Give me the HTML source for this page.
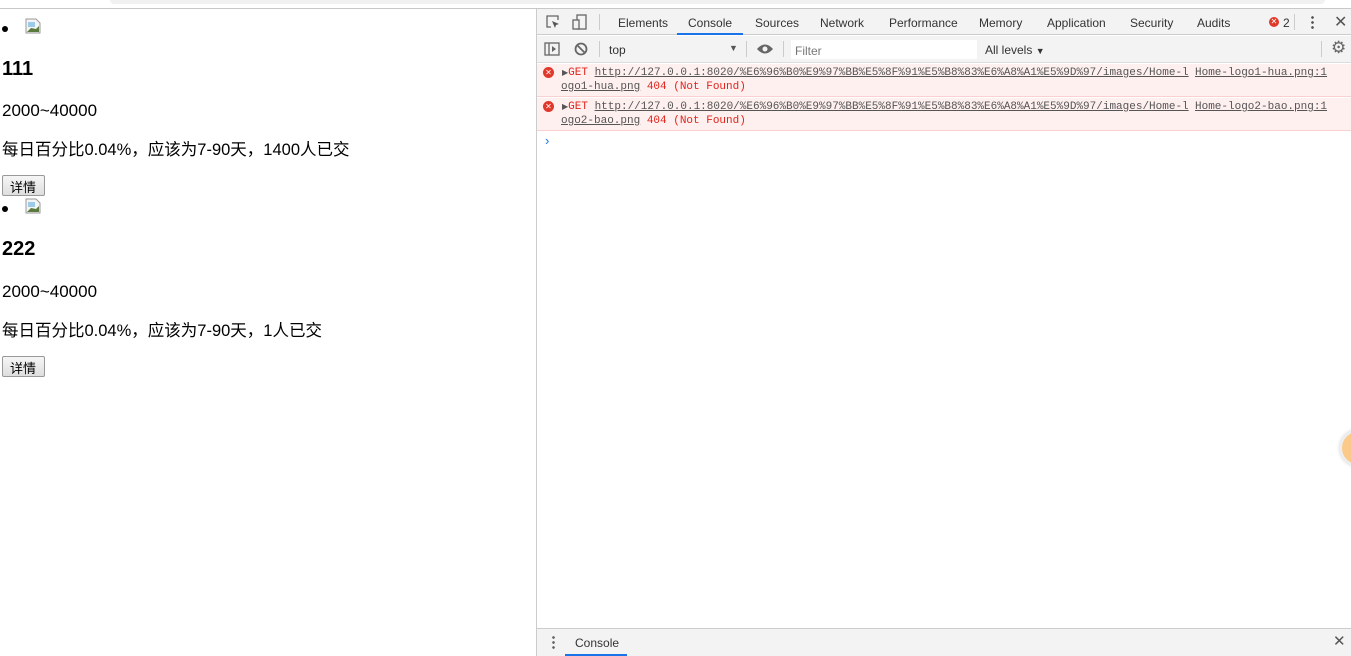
<!DOCTYPE html>
<html><head><meta charset="utf-8"><style>
*{margin:0;padding:0;box-sizing:border-box}
body{width:1351px;height:656px;overflow:hidden;background:#fff;font-family:"Liberation Sans","Noto Sans CJK SC",sans-serif;position:relative;color:#000}
.a{position:absolute;white-space:nowrap}
.t{font-size:17px}
.h{font-size:20px;font-weight:bold}
.btn{position:absolute;height:21px;border:1px solid #999;background:linear-gradient(#f6f6f6,#dedede);font-size:13px;padding:1px 8px 1px 7px;border-radius:2px}
.dot{position:absolute;width:6px;height:6px;border-radius:3px;background:#000}
.img{position:absolute;width:16px;height:16px}
.dt{font-size:12px;color:#333;font-family:"Liberation Sans",sans-serif}
.mono{font-family:"Liberation Mono",monospace;font-size:11px;color:#e0241b}
.u{text-decoration:underline;color:#555}
</style></head><body>
<div class="a" style="left:0;top:0;width:1351px;height:9px;background:#fff"></div>
<div class="a" style="left:110px;top:0;width:1215px;height:4px;background:#f1f1f1;border-radius:0 0 8px 8px"></div>
<div class="a" style="left:0;top:8px;width:1351px;height:1px;background:#c8c8c8"></div>

<!-- page -->
<div class="dot" style="left:2px;top:26px"></div>
<svg class="img" style="left:25px;top:18px" viewBox="0 0 16 16"><path d="M1 1h10l4 4v10H1z" fill="#f4f4f4" stroke="#999"/><path d="M3 4h7v5H3z" fill="#9ccbea"/><path d="M2 14l4-4 5 1 3-3v6z" fill="#5a7a3e"/></svg>
<div class="a h" style="left:2px;top:58px">111</div>
<div class="a t" style="left:2px;top:101px">2000~40000</div>
<div class="a t" style="left:2px;top:136px;font-size:16.5px">每日百分比0.04%，应该为7-90天，1400人已交</div>
<div class="btn" style="left:2px;top:175px">详情</div>
<div class="dot" style="left:2px;top:206px"></div>
<svg class="img" style="left:25px;top:198px" viewBox="0 0 16 16"><path d="M1 1h10l4 4v10H1z" fill="#f4f4f4" stroke="#999"/><path d="M3 4h7v5H3z" fill="#9ccbea"/><path d="M2 14l4-4 5 1 3-3v6z" fill="#5a7a3e"/></svg>
<div class="a h" style="left:2px;top:238px">222</div>
<div class="a t" style="left:2px;top:282px">2000~40000</div>
<div class="a t" style="left:2px;top:317px;font-size:16.5px">每日百分比0.04%，应该为7-90天，1人已交</div>
<div class="btn" style="left:2px;top:356px">详情</div>

<!-- devtools -->
<div class="a" style="left:536px;top:9px;width:1px;height:647px;background:#ccc"></div>
<div class="a" style="left:537px;top:9px;width:814px;height:26px;background:#f3f3f3;border-bottom:1px solid #ccc"></div>
<svg class="a" style="left:545px;top:14px" width="16" height="16" viewBox="0 0 16 16"><path d="M6 13H2V2h11v4" fill="none" stroke="#666" stroke-width="1.3"/><path d="M7 7l7 3-3 1-1 3z" fill="#555"/></svg>
<svg class="a" style="left:572px;top:14px" width="16" height="16" viewBox="0 0 16 16"><rect x="5" y="1" width="9" height="14" fill="none" stroke="#666" stroke-width="1.3"/><rect x="1" y="6" width="6" height="9" fill="#f3f3f3" stroke="#666" stroke-width="1.3"/></svg>
<div class="a" style="left:599px;top:14px;width:1px;height:16px;background:#ccc"></div>
<div class="a dt" style="left:618px;top:16px">Elements</div>
<div class="a dt" style="left:688px;top:16px">Console</div>
<div class="a" style="left:677px;top:33px;width:66px;height:2px;background:#1a73e8"></div>
<div class="a dt" style="left:755px;top:16px">Sources</div>
<div class="a dt" style="left:820px;top:16px">Network</div>
<div class="a dt" style="left:889px;top:16px">Performance</div>
<div class="a dt" style="left:979px;top:16px">Memory</div>
<div class="a dt" style="left:1047px;top:16px">Application</div>
<div class="a dt" style="left:1130px;top:16px">Security</div>
<div class="a dt" style="left:1197px;top:16px">Audits</div>
<div class="a" style="left:1269px;top:17px;width:10px;height:10px;border-radius:5px;background:#e0392b;color:#fff;font-size:8px;line-height:10px;text-align:center">✕</div>
<div class="a dt" style="left:1283px;top:16px">2</div>
<div class="a" style="left:1294px;top:14px;width:1px;height:16px;background:#ccc"></div>
<div class="a" style="left:1311px;top:15px;width:3px;height:14px;background:radial-gradient(circle,#555 1.2px,transparent 1.5px) 0 0/3px 5px"></div>
<div class="a" style="left:1334px;top:12px;font-size:16px;color:#555">✕</div>

<div class="a" style="left:537px;top:36px;width:814px;height:27px;background:#f3f3f3;border-bottom:1px solid #ddd"></div>
<svg class="a" style="left:544px;top:42px" width="16" height="14" viewBox="0 0 16 14"><rect x="1" y="1" width="14" height="12" fill="none" stroke="#666" stroke-width="1.3"/><path d="M5 1v12" stroke="#666" stroke-width="1.3"/><path d="M8 4l4 3-4 3z" fill="#666"/></svg>
<svg class="a" style="left:574px;top:42px" width="14" height="14" viewBox="0 0 14 14"><circle cx="7" cy="7" r="5.5" fill="none" stroke="#666" stroke-width="1.8"/><path d="M3 3l8 8" stroke="#666" stroke-width="1.8"/></svg>
<div class="a" style="left:599px;top:41px;width:1px;height:16px;background:#ccc"></div>
<div class="a dt" style="left:609px;top:43px">top</div>
<div class="a" style="left:729px;top:43px;font-size:9px;color:#555">▼</div>
<div class="a" style="left:746px;top:41px;width:1px;height:16px;background:#ccc"></div>
<svg class="a" style="left:756px;top:43px" width="18" height="12" viewBox="0 0 18 12"><path d="M1 6Q9 -3 17 6Q9 15 1 6z" fill="#666"/><circle cx="9" cy="6" r="2.5" fill="#f3f3f3"/></svg>
<div class="a" style="left:783px;top:41px;width:1px;height:16px;background:#ccc"></div>
<div class="a" style="left:791px;top:40px;width:186px;height:19px;background:#fff"></div>
<div class="a dt" style="left:795px;top:44px;color:#777">Filter</div>
<div class="a dt" style="left:985px;top:43px">All levels <span style="font-size:9px">▼</span></div>
<div class="a" style="left:1321px;top:41px;width:1px;height:16px;background:#ccc"></div>
<div class="a" style="left:1331px;top:38px;font-size:17px;color:#666">⚙</div>

<div class="a" style="left:537px;top:64px;width:814px;height:33px;background:#fff0f0;border-bottom:1px solid #fbd0d0"></div>
<div class="a" style="left:537px;top:98px;width:814px;height:33px;background:#fff0f0;border-bottom:1px solid #fbd0d0"></div>
<div class="a" style="left:543px;top:67px;width:11px;height:11px;border-radius:6px;background:#e0392b;color:#fff;font-size:8px;line-height:11px;text-align:center">✕</div>
<div class="a" style="left:543px;top:101px;width:11px;height:11px;border-radius:6px;background:#e0392b;color:#fff;font-size:8px;line-height:11px;text-align:center">✕</div>
<div class="a mono" style="left:562px;top:67px"><span style="color:#555;font-size:8px">▶</span>GET <span class="u">http://127.0.0.1:8020/%E6%96%B0%E9%97%BB%E5%8F%91%E5%B8%83%E6%A8%A1%E5%9D%97/images/Home-l</span></div>
<div class="a mono" style="left:561px;top:81px"><span class="u">ogo1-hua.png</span> 404 (Not Found)</div>
<div class="a mono" style="left:1195px;top:67px"><span class="u">Home-logo1-hua.png:1</span></div>
<div class="a mono" style="left:562px;top:101px"><span style="color:#555;font-size:8px">▶</span>GET <span class="u">http://127.0.0.1:8020/%E6%96%B0%E9%97%BB%E5%8F%91%E5%B8%83%E6%A8%A1%E5%9D%97/images/Home-l</span></div>
<div class="a mono" style="left:561px;top:115px"><span class="u">ogo2-bao.png</span> 404 (Not Found)</div>
<div class="a mono" style="left:1195px;top:101px"><span class="u">Home-logo2-bao.png:1</span></div>
<div class="a" style="left:545px;top:133px;color:#1a73e8;font-size:13px">›</div>

<div class="a" style="left:1340px;top:430px;width:36px;height:36px;border-radius:18px;background:#fbc98a;border:2px solid #eee;box-shadow:0 0 4px #ccc"></div>

<div class="a" style="left:537px;top:628px;width:814px;height:28px;background:#f3f3f3;border-top:1px solid #ccc"></div>
<div class="a" style="left:552px;top:635px;width:3px;height:14px;background:radial-gradient(circle,#666 1.2px,transparent 1.5px) 0 0/3px 5px"></div>
<div class="a dt" style="left:575px;top:636px">Console</div>
<div class="a" style="left:565px;top:654px;width:62px;height:2px;background:#1a73e8"></div>
<div class="a" style="left:1333px;top:632px;font-size:15px;color:#555">✕</div>
</body></html>
